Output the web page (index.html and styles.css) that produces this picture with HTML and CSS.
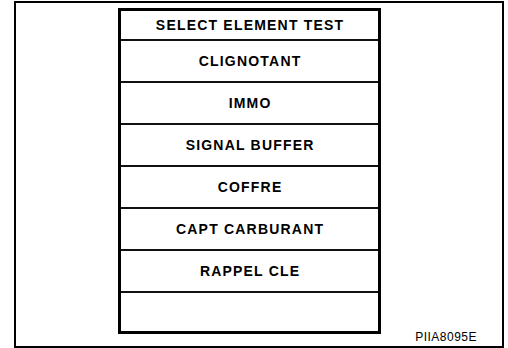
FILE: index.html
```html
<html>
<head>
<title>Select Element Test</title>
<link rel="stylesheet" href="styles.css">
</head>
<body>
<div class="frame">
    <div class="menu">
        <div class="menu-head">SELECT ELEMENT TEST</div>
        <div class="menu-item">CLIGNOTANT</div>
        <div class="menu-item">IMMO</div>
        <div class="menu-item">SIGNAL BUFFER</div>
        <div class="menu-item">COFFRE</div>
        <div class="menu-item">CAPT CARBURANT</div>
        <div class="menu-item">RAPPEL CLE</div>
        <div class="menu-item menu-blank"></div>
    </div>
    <div class="ref">PIIA8095E</div>
</div>
</body>
</html>
```

FILE: styles.css
```css
*
{
    margin: 0;
    padding: 0;
}
html
{
    background: #fff;
}
body
{
    font-family: "Liberation Sans", Arial, sans-serif;
    color: #000;
    background: #fff;
    overflow: hidden;
}
.frame
{
    box-sizing: border-box;
    width: 490px;
    height: 347px;
    margin: 1px 0 0 14px;
    padding: 5px 0 0 102px;
    border: 2px solid #000;
    display: flex;
}
.menu
{
    box-sizing: border-box;
    width: 263px;
    height: 326px;
    border: 3px solid #000;
    display: flex;
    flex-direction: column;
    flex-shrink: 0;
}
.menu-head,
.menu-item
{
    box-sizing: border-box;
    display: flex;
    align-items: center;
    justify-content: center;
    border-bottom: 2px solid #111;
    font-size: 14px;
    font-weight: bold;
    letter-spacing: 1.2px;
    padding-left: 1.2px;
}
.menu-head
{
    height: 30px;
}
.menu-item
{
    height: 42px;
}
.menu-blank
{
    flex: 1;
    border-bottom: none;
}
.ref
{
    align-self: flex-end;
    margin: 0 25px 2px auto;
    font-size: 12px;
    line-height: 14px;
    letter-spacing: 0.5px;
}
```
